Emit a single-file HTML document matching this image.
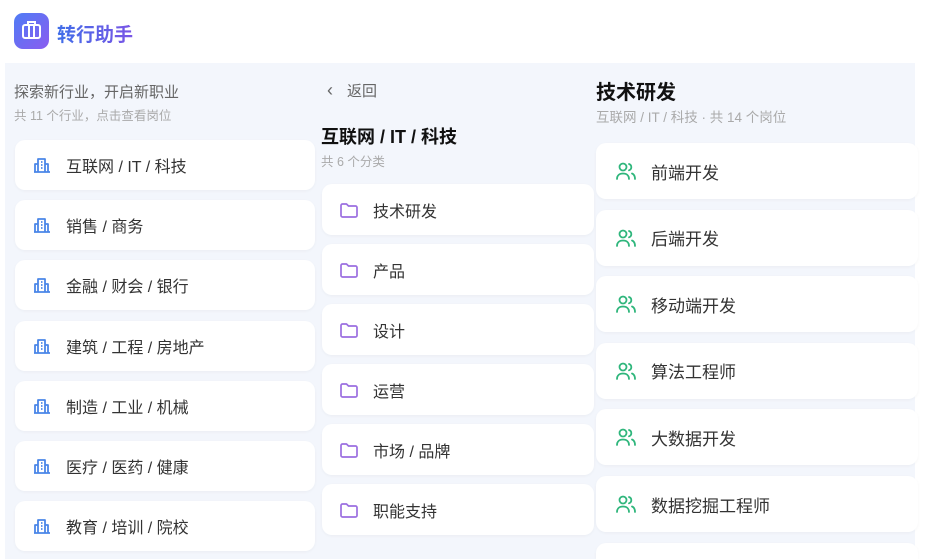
<!DOCTYPE html>
<html><head><meta charset="utf-8"><style>
*{margin:0;padding:0;box-sizing:border-box}
html,body{width:933px;height:559px;overflow:hidden}
body{background:#fff;font-family:"Liberation Sans","Noto Sans CJK SC",sans-serif;position:relative}
.abs{position:absolute}
.logo{left:14px;top:13px;width:35px;height:36px;border-radius:9px;background:linear-gradient(135deg,#4f7cf5,#8a5cf0)}
.brand{left:57px;top:20px;font-size:19px;font-weight:bold;background:linear-gradient(90deg,#3f6ee8,#7a55e6);-webkit-background-clip:text;color:transparent}
.panel{background:#f3f6fc;top:63px;height:496px}
.card{position:absolute;background:#fff;border-radius:10px;box-shadow:0 1px 3px rgba(0,0,0,.04);display:flex;align-items:center;font-size:16px;color:#333}
.card svg{flex:none}
</style></head><body>
<div class="abs logo"><svg width="35" height="36" viewBox="0 0 35 36"><rect x="9" y="12" width="17" height="13" rx="2" fill="none" stroke="#fff" stroke-width="2"/><path d="M14 12V9h7v3M15 12v13M20 12v13" stroke="#fff" stroke-width="2" fill="none"/></svg></div>
<div class="abs brand">转行助手</div>

<div class="abs panel" style="left:5px;width:312px"></div>
<div class="abs" style="left:14px;top:81px;font-size:15px;color:#666">探索新行业，开启新职业</div>
<div class="abs" style="left:14px;top:105px;font-size:12.5px;color:#aaa">共 11 个行业，点击查看岗位</div>

<div class="abs panel" style="left:315px;width:278px"></div>
<div class="abs" style="left:327px;top:80px;font-size:15px;color:#666"><span style="display:inline-block;width:20px;font-size:18px;line-height:15px">‹</span>返回</div>
<div class="abs" style="left:321px;top:123px;font-size:18px;font-weight:bold;color:#111">互联网 / IT / 科技</div>
<div class="abs" style="left:321px;top:151px;font-size:12.5px;color:#aaa">共 6 个分类</div>

<div class="abs panel" style="left:592px;width:323px"></div>
<div class="abs" style="left:596px;top:76px;font-size:20px;font-weight:bold;color:#111">技术研发</div>
<div class="abs" style="left:596px;top:106px;font-size:13.5px;color:#aaa">互联网 / IT / 科技 · 共 14 个岗位</div>

<div id="c1"></div>
<script>
var b='<svg width="20" height="20" viewBox="0 0 20 20" style="margin:0 14px 0 17px"><path d="M6 17V4h7v13M3 17V9h3M13 9h3v8M2 17h16M9 7h1.5M9 10h1.5M9 13h1.5" fill="none" stroke="#4a86e8" stroke-width="1.8" stroke-linejoin="round"/></svg>';
var f='<svg width="20" height="20" viewBox="0 0 20 20" style="margin:0 14px 0 17px"><path d="M2 5.5a1.5 1.5 0 0 1 1.5-1.5h4l2 2h7a1.5 1.5 0 0 1 1.5 1.5v8a1.5 1.5 0 0 1-1.5 1.5h-13A1.5 1.5 0 0 1 2 15.5z" fill="none" stroke="#9b6fe0" stroke-width="1.7" stroke-linejoin="round"/></svg>';
var u='<svg width="22" height="20" viewBox="0 0 22 20" style="margin:0 14px 0 19px"><circle cx="8" cy="6" r="3.5" fill="none" stroke="#2fb67c" stroke-width="1.8"/><path d="M2 18c0-3.5 2.5-5.5 6-5.5s6 2 6 5.5M14 3a3.3 3.3 0 0 1 0 6.3M17 12.5c2 .8 3 2.8 3 5.5" fill="none" stroke="#2fb67c" stroke-width="1.8" stroke-linecap="round"/></svg>';
var h='';
["互联网 / IT / 科技","销售 / 商务","金融 / 财会 / 银行","建筑 / 工程 / 房地产","制造 / 工业 / 机械","医疗 / 医药 / 健康","教育 / 培训 / 院校"].forEach(function(t,i){h+='<div class="card" style="left:15px;top:'+(140+i*60.2)+'px;width:300px;height:50px">'+b+t+'</div>'});
["技术研发","产品","设计","运营","市场 / 品牌","职能支持"].forEach(function(t,i){h+='<div class="card" style="left:322px;top:'+(184+i*60)+'px;width:272px;height:51px">'+f+t+'</div>'});
["前端开发","后端开发","移动端开发","算法工程师","大数据开发","数据挖掘工程师",""].forEach(function(t,i){h+='<div class="card" style="left:596px;top:'+(143+i*66.6)+'px;width:322px;height:'+(t?56:16)+'px;font-size:17px;border-radius:'+(t?'10px':'10px 10px 0 0')+'">'+(t?u+t:'')+'</div>'});
document.getElementById('c1').innerHTML=h;
</script>
</body></html>
